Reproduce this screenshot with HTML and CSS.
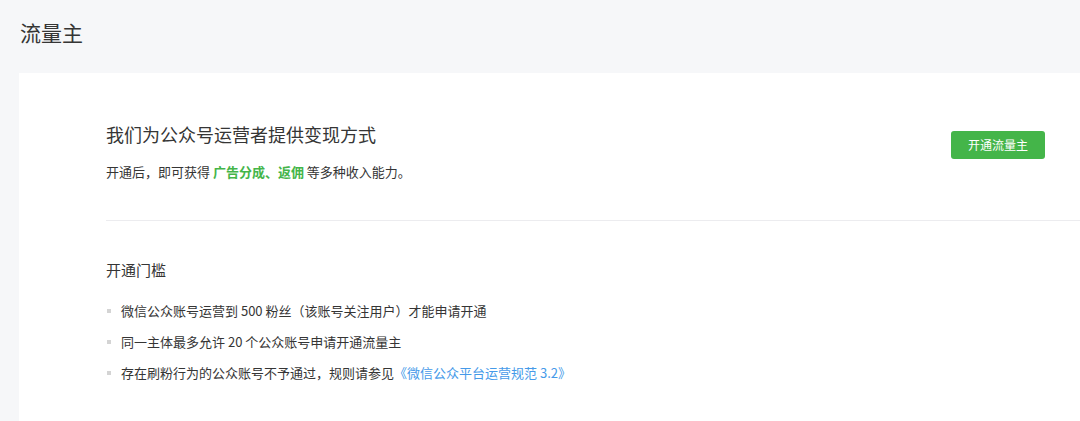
FILE: index.html
```html
<!DOCTYPE html>
<html lang="zh-CN">
<head>
<meta charset="utf-8">
<title>流量主</title>
<link rel="stylesheet" href="styles.css">
</head>
<body>
<div class="page">
  <h1 class="page-title">流量主</h1>
  <div class="card">
    <div class="intro">
      <div class="intro-text">
        <h2 class="intro-title">我们为公众号运营者提供变现方式</h2>
        <p class="intro-desc">开通后，即可获得 <span class="hl">广告分成、返佣</span> 等多种收入能力。</p>
      </div>
      <button class="btn-primary">开通流量主</button>
    </div>
    <div class="req">
      <h3 class="req-title">开通门槛</h3>
      <ul class="req-list">
        <li>微信公众账号运营到 500 粉丝（该账号关注用户）才能申请开通</li>
        <li>同一主体最多允许 20 个公众账号申请开通流量主</li>
        <li>存在刷粉行为的公众账号不予通过，规则请参见<a class="link" href="#">《微信公众平台运营规范 3.2》</a></li>
      </ul>
    </div>
  </div>
</div>
</body>
</html>
```

FILE: styles.css
```css
* { box-sizing: border-box; }
html, body {
  margin: 0;
  padding: 0;
  height: 100%;
  background: #f6f7f9;
  font-family: "Noto Sans CJK SC", "Noto Sans", sans-serif;
  color: #353535;
  overflow: hidden;
}
.page {
  padding: 18px 0 0 19px;
  height: 100%;
  display: flex;
  flex-direction: column;
}
.page-title {
  margin: 0 0 27px 1px;
  font-size: 21px;
  line-height: 28px;
  font-weight: 400;
  color: #353535;
}
.card {
  flex: 1;
  background: #fff;
  padding: 49px 0 0 87px;
}
.intro {
  display: flex;
  align-items: center;
  justify-content: space-between;
  padding: 0 35px 38px 0;
  border-bottom: 1px solid #ececef;
}
.intro-title {
  margin: 0 0 16px;
  font-size: 18px;
  line-height: 24px;
  font-weight: 400;
  color: #353535;
}
.intro-desc {
  margin: 0;
  font-size: 13px;
  line-height: 20px;
  color: #353535;
}
.hl {
  color: #44b549;
  font-weight: 700;
}
.btn-primary {
  width: 94px;
  height: 28px;
  margin-top: -15px;
  border: 0;
  border-radius: 3px;
  background: #44b549;
  color: #fff;
  font-family: inherit;
  font-size: 12px;
  line-height: 28px;
  padding: 0;
}
.req {
  padding-top: 38px;
}
.req-title {
  margin: 0 0 20px;
  font-size: 15px;
  line-height: 22px;
  font-weight: 400;
  color: #353535;
}
.req-list {
  list-style: none;
  margin: 0;
  padding: 0;
}
.req-list li {
  display: flex;
  align-items: center;
  font-size: 13px;
  line-height: 20px;
  color: #353535;
  margin-bottom: 11px;
}
.req-list li::before {
  content: "";
  width: 4px;
  height: 4px;
  background: #d4d4d4;
  margin: 0 10px 0 1px;
  flex: none;
}
.link {
  color: #459ae9;
  text-decoration: none;
}
```
